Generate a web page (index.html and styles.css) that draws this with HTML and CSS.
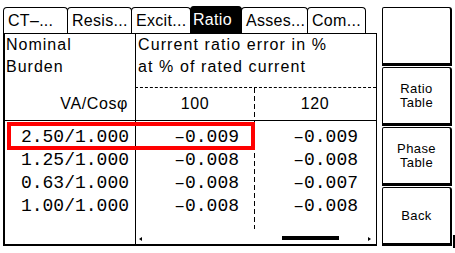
FILE: index.html
```html
<!DOCTYPE html>
<html lang="en">
<head>
    <meta charset="UTF-8">
    <meta name="viewport" content="width=device-width, initial-scale=1.0">
    <title>CT Analyzer - Ratio</title>
    <link rel="stylesheet" href="styles.css">
</head>
<body>
    <div class="screen">
        <div class="panel">
            <div class="tabs">
                <div class="tab">CT–...</div>
                <div class="tab">Resis...</div>
                <div class="tab">Excit...</div>
                <div class="tab active">Ratio</div>
                <div class="tab">Asses...</div>
                <div class="tab">Com...</div>
            </div>
            <div class="sheet">
                <div class="head">
                    <div class="burden">Nominal<br>Burden</div>
                    <div class="title">Current ratio error in %<br>at % of rated current</div>
                    <div class="unit">VA/Cosφ</div>
                    <div class="pct">100</div>
                    <div class="pct dashed">120</div>
                </div>
                <div class="body">
                    <div class="col col-burden">
                        <div>2.50/1.000</div>
                        <div>1.25/1.000</div>
                        <div>0.63/1.000</div>
                        <div>1.00/1.000</div>
                    </div>
                    <div class="col col-100">
                        <div>–0.009</div>
                        <div>–0.008</div>
                        <div>–0.008</div>
                        <div>–0.008</div>
                    </div>
                    <div class="col col-120 dashed">
                        <div>–0.009</div>
                        <div>–0.008</div>
                        <div>–0.007</div>
                        <div>–0.008</div>
                    </div>
                    <div class="selected"></div>
                </div>
                <div class="scroll">
                    <div></div>
                    <div class="scroll-track">
                        <span class="arrow-left"></span>
                        <span class="thumb"></span>
                        <span class="arrow-right"></span>
                    </div>
                </div>
            </div>
        </div>
        <div class="softkeys">
            <div class="key"></div>
            <div class="key">Ratio<br>Table</div>
            <div class="key">Phase<br>Table</div>
            <div class="key">Back</div>
        </div>
        <div class="cursor"></div>
    </div>
</body>
</html>
```

FILE: styles.css
```css
body {
    margin: 0;
    background-color: #fff;
    color: #000;
    font-family: "Liberation Sans", Arial, sans-serif;
}
.screen {
    display: flex;
    height: 253px;
    padding: 7px 0 0 3px;
    box-sizing: border-box;
}
.panel {
    width: 374px;
    height: 239px;
    display: flex;
    flex-direction: column;
}
.tabs {
    display: flex;
    height: 26px;
}
.tab {
    box-sizing: border-box;
    height: 27px;
    border: 1px solid #000;
    border-bottom: none;
    border-radius: 4px 4px 0 0;
    padding-left: 4px;
    font-size: 16px;
    line-height: 25px;
    letter-spacing: 0.3px;
    white-space: nowrap;
    overflow: hidden;
}
.tab:nth-child(1) { width: 65px; }
.tab:nth-child(2) { width: 65px; margin-left: -1px; }
.tab:nth-child(3) { width: 60px; margin-left: -1px; }
.tab:nth-child(4) { width: 52px; margin-left: -1px; }
.tab:nth-child(5) { width: 67px; margin-left: -1px; }
.tab:nth-child(6) { width: 59px; margin-left: -1px; }
.tab.active {
    background-color: #000;
    color: #fff;
    margin-top: -1px;
    height: 28px;
    padding-left: 2px;
}
.sheet {
    flex: 1;
    display: flex;
    flex-direction: column;
    border-top: 1px solid #000;
    border-left: 2px solid #000;
    border-right: 1px solid #000;
    border-bottom: 2px solid #000;
}
.head {
    display: grid;
    grid-template-columns: 130px 119px 1fr;
    grid-template-rows: 54px 32px;
    border-bottom: 1px solid #000;
    font-size: 16px;
}
.burden {
    line-height: 22px;
    letter-spacing: 1px;
    padding-left: 1px;
}
.title {
    grid-column: 2 / 4;
    border-left: 1px solid #000;
    border-bottom: 1px dashed #000;
    padding-left: 2px;
    line-height: 22px;
    letter-spacing: 1.1px;
    white-space: nowrap;
}
.unit {
    text-align: right;
    padding-right: 7px;
    line-height: 32px;
    letter-spacing: 0.6px;
}
.pct {
    text-align: center;
    line-height: 32px;
    border-left: 1px solid #000;
    letter-spacing: 0.6px;
}
.dashed {
    border-left: none;
    background: repeating-linear-gradient(to bottom, #000 0 5px, transparent 5px 8px) left top / 1px 100% no-repeat;
}
.body {
    flex: 1;
    position: relative;
    display: grid;
    grid-template-columns: 130px 119px 1fr;
    font-family: "Liberation Mono", "DejaVu Sans Mono", monospace;
    font-size: 18px;
}
.col {
    padding-top: 5px;
    line-height: 23px;
    text-align: right;
}
.col-burden {
    padding-right: 6px;
}
.col-100 {
    border-left: 1px solid #000;
    padding-right: 15px;
}
.col-120 {
    padding-right: 18px;
}
.selected {
    position: absolute;
    left: 2px;
    top: 1px;
    width: 248px;
    height: 28px;
    box-sizing: border-box;
    border: 4px solid #f00;
}
.scroll {
    height: 15px;
    display: grid;
    grid-template-columns: 130px 1fr;
}
.scroll-track {
    border-left: 1px solid #000;
    display: flex;
    align-items: center;
    padding: 4px 5px 0 3px;
}
.arrow-left {
    border-right: 3px solid #000;
    border-top: 2px solid transparent;
    border-bottom: 2px solid transparent;
}
.thumb {
    width: 57px;
    height: 4px;
    background-color: #000;
    margin: -2px 29px 0 auto;
}
.arrow-right {
    border-left: 3px solid #000;
    border-top: 2px solid transparent;
    border-bottom: 2px solid transparent;
}
.softkeys {
    width: 70px;
    margin-left: 5px;
    display: flex;
    flex-direction: column;
    gap: 1px;
}
.key {
    height: 59px;
    box-sizing: border-box;
    border: 1px solid #000;
    border-right-width: 2px;
    border-bottom-width: 3px;
    border-radius: 2px 3px 0 0;
    display: flex;
    align-items: center;
    justify-content: center;
    text-align: center;
    font-size: 13px;
    line-height: 14px;
    letter-spacing: 0.4px;
}
.cursor {
    width: 2px;
    height: 13px;
    align-self: flex-end;
    margin: 0 0 5px 1px;
    background-color: #000;
}
```
